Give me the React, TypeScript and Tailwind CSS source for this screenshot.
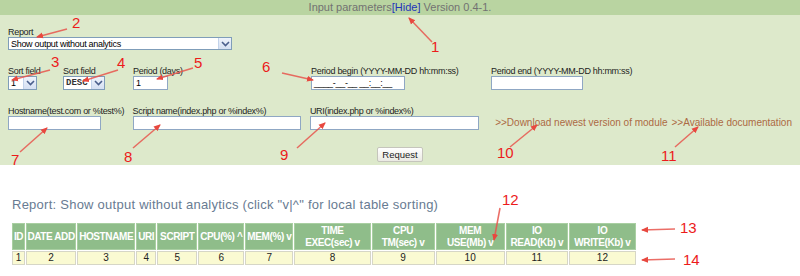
import React from 'react';

const font = "font-['Liberation_Sans',Arial,sans-serif]";

const Chevron = () => (
  <svg width="9" height="6" viewBox="0 0 9 6">
    <path d="M1 1 L4.5 4.5 L8 1" fill="none" stroke="#4a5f8c" strokeWidth="1.6" />
  </svg>
);

const Select = ({ value, className, valueClass }: { value: string; className: string; valueClass?: string }) => (
  <div className={`flex border border-[#7f9db9] bg-white ${className}`}>
    <span className={`flex-1 truncate pl-[2px] ${valueClass ?? 'text-[9px] leading-[12px] tracking-[-0.3px]'}`}>{value}</span>
    <span className="flex w-[13px] items-center justify-center border-l border-[#c3d3ea] bg-gradient-to-b from-[#eef3fb] to-[#d5e0f2]">
      <Chevron />
    </span>
  </div>
);

const Input = ({ className, value }: { className: string; value?: string }) => (
  <div className={`h-[14px] border border-[#8fa7c4] bg-white pl-[2px] text-[9px] leading-[12px] tracking-[-0.3px] ${className}`}>
    {value}
  </div>
);

const Label = ({ children }: { children: React.ReactNode }) => (
  <div className="h-[10px] whitespace-nowrap text-[9px] leading-[10px] tracking-[-0.3px] text-[#1e1e1e]">{children}</div>
);

const arrows = [
  [432, 42, 409, 18],
  [67, 29, 37, 37],
  [50, 70, 12, 80],
  [118, 70, 83, 81],
  [193, 68, 157, 79],
  [282, 73, 313, 80],
  [20, 152, 47, 128],
  [133, 148, 160, 125],
  [297, 148, 325, 123],
  [510, 147, 537, 125],
  [675, 147, 698, 127],
  [500, 208, 494, 240],
  [675, 229, 642, 230],
  [675, 259, 642, 260],
];

const numbers: [string, number, number][] = [
  ['1', 431, 52],
  ['2', 72, 28],
  ['3', 51, 67],
  ['4', 117, 68],
  ['5', 194, 68],
  ['6', 262, 72],
  ['7', 11, 165],
  ['8', 124, 162],
  ['9', 280, 160],
  ['10', 497, 158],
  ['11', 661, 161],
  ['12', 502, 205],
  ['13', 680, 233],
  ['14', 683, 265],
];

const heads: React.ReactNode[] = [
  'ID',
  'DATE ADD',
  'HOSTNAME',
  'URI',
  'SCRIPT',
  'CPU(%) ^',
  'MEM(%) v',
  <>TIME<br />EXEC(sec) v</>,
  <>CPU<br />TM(sec) v</>,
  <>MEM<br />USE(Mb) v</>,
  <>IO<br />READ(Kb) v</>,
  <>IO<br />WRITE(Kb) v</>,
];

export default function App() {
  return (
    <div className={`relative h-[276px] w-[800px] overflow-hidden bg-white ${font}`}>
      <div className="bg-[#dde9cb]">
        <div className="h-[15px] bg-[#b9d4a1] text-center text-[11px] leading-[15px] text-[#727272]">
          Input parameters<span className="text-[#2233bb]">[Hide]</span> Version 0.4-1.
        </div>
        <div className="px-[8px] pb-[3px] pt-[12px]">
          <Label>Report</Label>
          <Select value="Show output without analytics" className="h-[13px] w-[224px]" />

          <div className="mt-[16px] flex">
            <div className="w-[55px]">
              <Label>Sort field</Label>
              <Select value="1" className="h-[14px] w-[29px]" />
            </div>
            <div className="w-[70px]">
              <Label>Sort field</Label>
              <Select
                value="DESC"
                className="h-[14px] w-[42px]"
                valueClass="font-['Liberation_Mono',monospace] text-[9px] leading-[12px] font-bold text-[#333]"
              />
            </div>
            <div className="w-[178px]">
              <Label>Period (days)</Label>
              <Input className="w-[35px]" value="1" />
            </div>
            <div className="w-[180px]">
              <Label>Period begin (YYYY-MM-DD hh:mm:ss)</Label>
              <Input className="w-[94px]" value="____-__-__ __:__:__" />
            </div>
            <div>
              <Label>Period end (YYYY-MM-DD hh:mm:ss)</Label>
              <Input className="w-[92px]" />
            </div>
          </div>

          <div className="mt-[16px] flex">
            <div className="w-[125px]">
              <Label>Hostname(test.com or %test%)</Label>
              <Input className="w-[93px]" />
            </div>
            <div className="w-[178px]">
              <Label>Script name(index.php or %index%)</Label>
              <Input className="w-[168px]" />
            </div>
            <div className="w-[186px]">
              <Label>URI(index.php or %index%)</Label>
              <Input className="w-[169px]" />
            </div>
            <div className="w-[177px] whitespace-nowrap pt-[11px] text-[10px] leading-[12px] text-[#ac6a44]">&gt;&gt;Download newest version of module</div>
            <div className="whitespace-nowrap pt-[11px] text-[10px] leading-[12px] text-[#ac6a44]">&gt;&gt;Available documentation</div>
          </div>

          <div className="mt-[17px] flex justify-center">
            <button className="h-[15px] w-[46px] rounded-[2px] border border-[#c5c5bc] bg-gradient-to-b from-white to-[#ebeae3] text-[9.5px] leading-[12px] text-[#222]">
              Request
            </button>
          </div>
        </div>
      </div>

      <div className="pl-[11px] pt-[33px]">
        <div className="pl-[1px] text-[13px] leading-[14px] tracking-[0.25px] text-[#687b92]">
          Report: Show output without analytics (click "v|^" for local table sorting)
        </div>
        <table className="mt-[10px] w-[626px] table-fixed border-separate border-spacing-[1px]">
          <colgroup>
            <col className="w-[13px]" />
            <col className="w-[50px]" />
            <col className="w-[58px]" />
            <col className="w-[20px]" />
            <col className="w-[40px]" />
            <col className="w-[46px]" />
            <col className="w-[48px]" />
            <col className="w-[76px]" />
            <col className="w-[63px]" />
            <col className="w-[69px]" />
            <col className="w-[62px]" />
            <col className="w-[67px]" />
          </colgroup>
          <thead>
            <tr>
              {heads.map((h, i) => (
                <th
                  key={i}
                  className="h-[27px] whitespace-nowrap border border-[#a9cfa2] bg-[#8fbd8a] px-0 text-center align-middle text-[10px] font-bold leading-[12px] tracking-[-0.4px] text-white"
                >
                  {h}
                </th>
              ))}
            </tr>
          </thead>
          <tbody>
            <tr>
              {heads.map((_, i) => (
                <td
                  key={i}
                  className="h-[14px] border border-[#d6d6c6] bg-[#fafad2] p-0 text-center text-[10px] leading-[12px] text-[#222]"
                >
                  {i + 1}
                </td>
              ))}
            </tr>
          </tbody>
        </table>
      </div>

      <svg className="pointer-events-none absolute left-0 top-0" width="800" height="276">
        <defs>
          <marker id="ah" markerWidth="8" markerHeight="8" refX="6" refY="4" orient="auto" markerUnits="userSpaceOnUse">
            <path d="M0 1 L7 4 L0 7 Z" fill="#e8483f" />
          </marker>
        </defs>
        {arrows.map(([x1, y1, x2, y2], i) => (
          <line key={i} x1={x1} y1={y1} x2={x2} y2={y2} stroke="#e8554c" strokeOpacity="0.85" strokeWidth="1.5" markerEnd="url(#ah)" />
        ))}
        {numbers.map(([t, x, y]) => (
          <text key={t} x={x} y={y} fill="#ec1b1b" fontSize="15" fontFamily="Liberation Sans, Arial, sans-serif">
            {t}
          </text>
        ))}
      </svg>
    </div>
  );
}
